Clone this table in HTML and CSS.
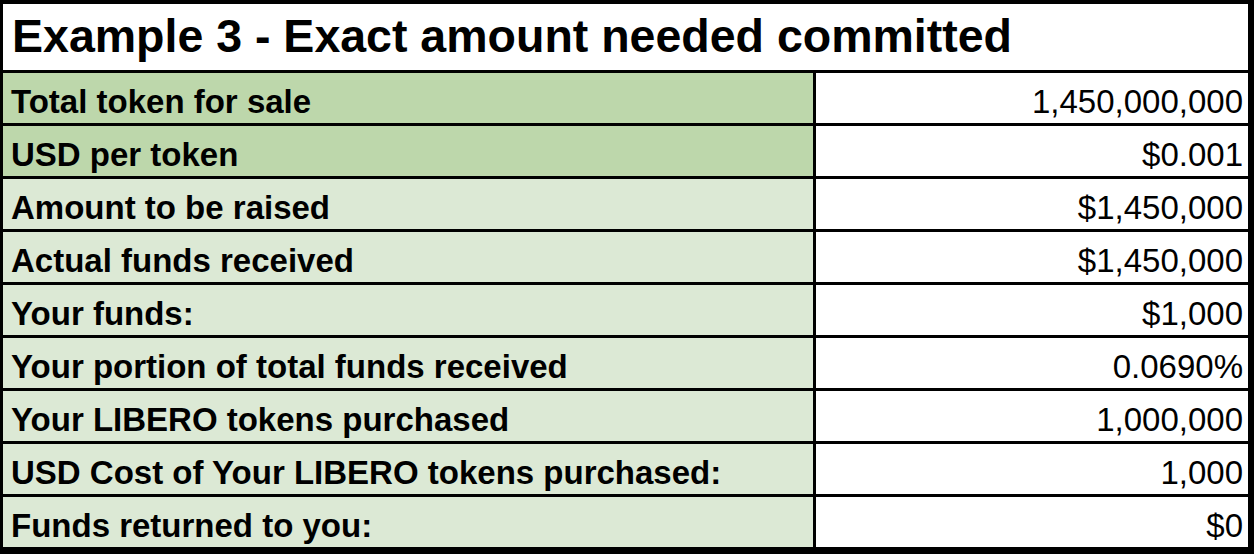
FILE: index.html
```html
<!DOCTYPE html>
<html>
<head>
<meta charset="utf-8">
<link rel="stylesheet" href="styles.css">
</head>
<body>
<div class="sheet">
  <div class="title">Example 3 - Exact amount needed committed</div>
  <div class="label dark">Total token for sale</div><div class="value">1,450,000,000</div>
  <div class="label dark">USD per token</div><div class="value">$0.001</div>
  <div class="label">Amount to be raised</div><div class="value">$1,450,000</div>
  <div class="label">Actual funds received</div><div class="value">$1,450,000</div>
  <div class="label">Your funds:</div><div class="value">$1,000</div>
  <div class="label">Your portion of total funds received</div><div class="value">0.0690%</div>
  <div class="label">Your LIBERO tokens purchased</div><div class="value">1,000,000</div>
  <div class="label">USD Cost of Your LIBERO tokens purchased:</div><div class="value">1,000</div>
  <div class="label">Funds returned to you:</div><div class="value">$0</div>
</div>
</body>
</html>
```
FILE: styles.css
```css
html, body {
  margin: 0;
  padding: 0;
  background: #fff;
}
.sheet {
  width: 1254px;
  height: 554px;
  box-sizing: border-box;
  border-style: solid;
  border-color: #000;
  border-width: 4px 6px 7px 3px;
  background: #000;
  display: grid;
  grid-template-columns: 810px 432px;
  grid-template-rows: 66px repeat(9, 50px);
  column-gap: 3px;
  row-gap: 3px;
  font-family: "Liberation Sans", Arial, sans-serif;
  color: #000;
}
.title {
  grid-column: 1 / span 2;
  background: #fff;
  font-size: 46.5px;
  font-weight: bold;
  line-height: 63px;
  padding: 1px 0 0 9px;
  white-space: nowrap;
}
.label {
  background: #dce9d5;
  font-size: 33px;
  font-weight: bold;
  line-height: 44px;
  padding: 7px 0 0 8px;
  white-space: nowrap;
}
.label.dark {
  background: #bdd7ab;
}
.value {
  background: #fff;
  font-size: 33px;
  line-height: 44px;
  padding: 7px 5px 0 0;
  text-align: right;
  white-space: nowrap;
}
```
